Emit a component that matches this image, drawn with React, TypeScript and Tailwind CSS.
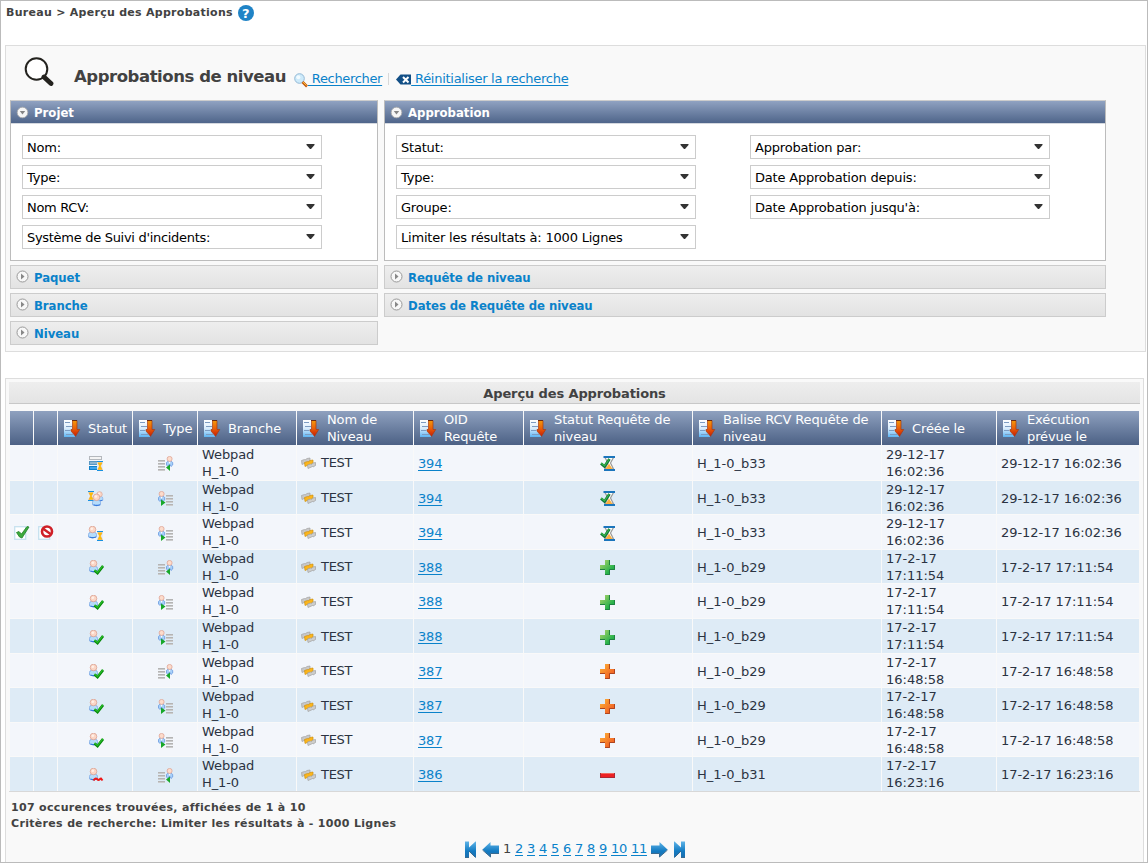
import React from "react";

const heading = "font-['DejaVu_Sans_Condensed','DejaVu_Sans',sans-serif] font-bold text-[13px]";

function SortIcon() {
  return (
    <svg width="17" height="18" viewBox="0 0 17 18" className="shrink-0">
      <defs>
        <linearGradient id="doc" x1="0" y1="0" x2="0" y2="1">
          <stop offset="0" stopColor="#ffffff" />
          <stop offset="0.5" stopColor="#d8ecfc" />
          <stop offset="1" stopColor="#5cb4f4" />
        </linearGradient>
        <linearGradient id="arr" x1="0" y1="0" x2="0" y2="1">
          <stop offset="0" stopColor="#f39a0c" />
          <stop offset="0.5" stopColor="#ea5f08" />
          <stop offset="1" stopColor="#c81c04" />
        </linearGradient>
      </defs>
      <path d="M0 1H11V18H0Z" fill="url(#doc)" />
      <path d="M1 3.500H6M2 7.500H8M1 11.500H6M2 15.500H9" stroke="#7d9cc2" strokeWidth="1" />
      <path d="M8.500 1.500H13V10.500H15.700L11.500 17.300L7 12V10.500H8.500Z" fill="url(#arr)" stroke="#a83a12" strokeWidth="0.7" />
      <path d="M8 1.500H13" stroke="#6b2a10" strokeWidth="1" />
    </svg>
  );
}

function Person({ x = 0, y = 0, s = 1 }: { x?: number; y?: number; s?: number }) {
  return (
    <g transform={`translate(${x} ${y}) scale(${s})`}>
      <path d="M0.5 11V8.5Q0.5 6.5 2.5 6.3H6.5Q8.5 6.5 8.5 8.5V11Q4.500 13 .5 11Z" fill="#b5dcfb" stroke="#7fa9e4" strokeWidth="0.8" />
      <path d="M1.500 11Q4.500 12.300 8 11" stroke="#3578dc" strokeWidth="1.200" fill="none" />
      <circle cx="4.500" cy="3.500" r="3.300" fill="#fbd6c6" stroke="#dba293" strokeWidth="0.8" />
      <circle cx="3.800" cy="2.700" r="1.300" fill="#fff0e8" />
    </g>
  );
}

function SmallPerson({ x = 0 }: { x?: number }) {
  return (
    <g transform={`translate(${x} 0)`}>
      <path d="M0.500 9V6.500L2 5.200H5L6.700 6.500V9L5 10.500L3.500 8L2 10.500Z" fill="#a9d1f8" stroke="#6898e0" strokeWidth="0.8" />
      <path d="M2.700 5.500H4.500L3.600 8Z" fill="#fff" />
      <circle cx="3.600" cy="2.900" r="2.500" fill="#fcdccc" stroke="#e0a496" strokeWidth="0.8" />
    </g>
  );
}

function Hourglass({ x, y, h = 9 }: { x: number; y: number; h?: number }) {
  return (
    <g transform={`translate(${x} ${y}) scale(1 ${h / 9})`}>
      <rect width="6" height="9" fill="#e5effa" />
      <path d="M0 .5H6M0 8.500H6" stroke="#1491e4" strokeWidth="1" />
      <path d="M.8 1.500H5.200L3.500 4.500L5.200 7.700H.8L2.500 4.500Z" fill="#ffc400" stroke="#f09a20" strokeWidth="0.5" />
    </g>
  );
}

function StatusIcon({ kind }: { kind: string }) {
  return (
    <svg width="16" height="16" viewBox="0 0 16 16">
      {kind === "list" && (
        <g>
          <rect x="1.500" y=".5" width="12" height="3" fill="#f4f4f4" stroke="#b4b8bd" />
          <rect x="1.500" y="5.500" width="12" height="3" fill="#8bb6d3" stroke="#5797c2" />
          <rect x="1.500" y="10.500" width="12" height="3" fill="#42a5ec" stroke="#1082cc" />
          <Hourglass x={9} y={5} h={10} />
        </g>
      )}
      {kind === "group" && (
        <g>
          <Hourglass x={0} y={0} h={10} />
          <Person x={8} y={0.5} s={0.8} />
          <Person x={4} y={2.800} />
        </g>
      )}
      {kind === "wait" && (
        <g>
          <Person x={0} y={0} />
          <Hourglass x={9} y={5} h={10} />
        </g>
      )}
      {kind === "ok" && (
        <g>
          <Person x={1} y={0} />
          <path d="M6.500 10.500L9.500 13L15 6" fill="none" stroke="#078a0b" strokeWidth="2.700" />
          <path d="M6.500 10.100L9.500 12.400L15 5.600" fill="none" stroke="#28bd28" strokeWidth="1.200" />
        </g>
      )}
      {kind === "no" && (
        <g>
          <Person x={1} y={0} />
          <path d="M5.500 12.500Q7.500 9.500 9 11T11.500 11.500T13 10.500L14.500 12.500" fill="none" stroke="#ee1717" strokeWidth="2" />
        </g>
      )}
    </svg>
  );
}

function TypeIcon({ right }: { right: boolean }) {
  const lines = right ? 0 : 8;
  return (
    <svg width="16" height="16" viewBox="0 0 16 16">
      {[4, 7, 10, 13].map((y) => (
        <g key={y}>
          <rect x={lines} y={y} width="7" height="2" fill="#cccccc" />
          <rect x={lines} y={y} width="7" height="1" fill="#b4b4b4" />
        </g>
      ))}
      <SmallPerson x={right ? 8 : 0} />
      {right ? (
        <path d="M12 8.500L8 11.500L12 15Z" fill="#18a829" />
      ) : (
        <path d="M3 8.500L7.500 11.500L3 15Z" fill="#18a829" />
      )}
    </svg>
  );
}

function LevelIcon() {
  return (
    <svg width="15" height="13" viewBox="0 0 15 13" className="mt-0.5 shrink-0">
      <path d="M.5 3.500L3.500 2.500L4 3L6 1.500L9 1V4.500L6 6L5.500 5.500L1 7.500Z" fill="#c8c8c8" stroke="#a2a2a2" strokeWidth=".7" />
      <path d="M3.500 5.500L6.500 4.500L7 5L9 3.500L12 3V6.500L9 8L8.500 7.500L4 9.500Z" fill="#fbb51c" stroke="#cf900f" strokeWidth=".7" />
      <path d="M6.500 8L9.500 7L10 7.500L12 6L14.500 5.500V8.500L12 10L11.500 9.500L7 11.500Z" fill="#cdcdcb" stroke="#a0a0a0" strokeWidth=".7" />
    </svg>
  );
}

function RequestIcon({ kind }: { kind: string }) {
  return (
    <svg width="16" height="16" viewBox="0 0 16 16">
      <defs>
        <linearGradient id="green" x1="0" y1="0" x2="1" y2="1">
          <stop offset="0.2" stopColor="#8ccb62" />
          <stop offset="0.7" stopColor="#25b14b" />
        </linearGradient>
        <linearGradient id="orange" x1="0" y1="0" x2="1" y2="1">
          <stop offset="0.1" stopColor="#fdab35" />
          <stop offset="0.7" stopColor="#f26a26" />
        </linearGradient>
      </defs>
      {kind === "hour" && (
        <g>
          <path d="M5 1.500H13.500L10.500 7L13.500 13H5L8 7Z" fill="#fff" stroke="#9b9b98" strokeWidth="1.200" />
          <path d="M9 7.500L12.500 13H5.500Z" fill="#fbb040" />
          <path d="M3.500 1H15M4 14H15" stroke="#1b75bc" strokeWidth="1.800" />
          <path d="M1 7.500L4.500 10.500L9.500 3" fill="none" stroke="#0c7436" strokeWidth="2.800" />
          <path d="M1 7.100L4.500 9.800L9.300 3" fill="none" stroke="#39b54a" strokeWidth="1.200" />
        </g>
      )}
      {(kind === "green" || kind === "orange") && (
        <g>
          <path
            d="M5 0H10V5H15V10H10V15H5V10H0V5H5Z"
            fill={kind === "green" ? "url(#green)" : "url(#orange)"}
          />
          <path
            d="M9.500 0V5M14.500 5V9.500H9.500V14.500H5M5 9.500H0"
            fill="none"
            stroke={kind === "green" ? "#1f8040" : "#ad4520"}
            strokeWidth="1"
          />
        </g>
      )}
      {kind === "minus" && <rect x=".5" y="5.500" width="14" height="4" fill="#ed2024" stroke="#ab2833" />}
      {kind === "minus" && <path d="M1 5.500H14" stroke="#f0695f" />}
    </svg>
  );
}

function ApproveIcon() {
  return (
    <svg width="16" height="16" viewBox="0 0 16 16">
      <rect x=".7" y="1.700" width="11" height="12.600" fill="#fff" stroke="#c6e1ef" strokeWidth="1.300" />
      <path d="M2.500 7.500L5 6.500L7.500 9L13 1.500L15 2L8 13L5.500 12Z" fill="#3caa3c" stroke="#208128" strokeWidth=".8" />
    </svg>
  );
}

function RejectIcon() {
  return (
    <svg width="16" height="16" viewBox="0 0 16 16">
      <rect x=".7" y="1.700" width="11" height="12.600" fill="#fff" stroke="#c6e1ef" strokeWidth="1.300" />
      <circle cx="9" cy="6.500" r="5" fill="#fff" stroke="#cf2027" strokeWidth="2.600" />
      <path d="M5.500 4L12.500 9" stroke="#cf2027" strokeWidth="2.400" />
    </svg>
  );
}

function Chevron({ open }: { open: boolean }) {
  return open ? (
    <svg width="13" height="13" viewBox="0 0 13 13">
      <circle cx="6.500" cy="6.500" r="5.300" fill="#f6f6f6" stroke="#a9a9a9" strokeWidth=".8" />
      <path d="M3.800 5H9.200L6.500 8.500Z" fill="#858585" />
    </svg>
  ) : (
    <svg width="13" height="13" viewBox="0 0 13 13" className="-mt-px">
      <circle cx="6.500" cy="6.500" r="5.500" fill="#f8f8f8" stroke="#999" strokeWidth="1" />
      <path d="M5 3.500L8.500 6.500L5 9.500Z" fill="#888" />
    </svg>
  );
}

function Select({ label, tracking = "tracking-[-0.2px]" }: { label: string; tracking?: string }) {
  return (
    <div className="flex h-6 w-[300px] items-center justify-between border border-[#cccccc] bg-white pr-1.5 pl-1 text-[13px] text-black">
      <span className={`pt-0.5 whitespace-nowrap ${tracking}`}>{label}</span>
      <svg width="9" height="5" viewBox="0 0 9 5" className="-mt-0.5">
        <path d="M.5 0H8.500V1L5 5H4L.5 1Z" fill="#333" />
      </svg>
    </div>
  );
}

function OpenPanel({ title, children }: { title: string; children: React.ReactNode }) {
  return (
    <section className="h-[161px] border border-[#bcbcbc] border-t-[#cccccc] bg-white">
      <h2 className={`flex h-[23px] items-center gap-[5px] border-b border-[#d4d8df] bg-linear-to-b from-[#90a2c1] to-[#4f658a] pl-[5px] text-white ${heading}`}>
        <Chevron open />
        <span className="pt-px">{title}</span>
      </h2>
      <div className="flex gap-[54px] pt-[11px] pl-[11px]">{children}</div>
    </section>
  );
}

function ClosedPanel({ title }: { title: string }) {
  return (
    <section className={`flex h-6 items-center gap-[5px] border border-[#cccccc] bg-linear-to-b from-[#eeeeee] to-[#e3e3e3] pl-[5px] tracking-[-0.06px] text-[#0a82ca] ${heading}`}>
      <Chevron open={false} />
      <span className="pt-px">{title}</span>
    </section>
  );
}

const headers: string[][] = [
  ["Statut"],
  ["Type"],
  ["Branche"],
  ["Nom de", "Niveau"],
  ["OID", "Requête"],
  ["Statut Requête de", "niveau"],
  ["Balise RCV Requête de", "niveau"],
  ["Créée le"],
  ["Exécution", "prévue le"],
];

type Row = {
  h: string;
  status: string;
  right: boolean;
  oid: string;
  req: string;
  tag: string;
  date: string;
  time: string;
  actions?: boolean;
};

const rows: Row[] = [
  { h: "h-[35px]", status: "list", right: true, oid: "394", req: "hour", tag: "H_1-0_b33", date: "29-12-17", time: "16:02:36" },
  { h: "h-[33px]", status: "group", right: false, oid: "394", req: "hour", tag: "H_1-0_b33", date: "29-12-17", time: "16:02:36" },
  { h: "h-[34px]", status: "wait", right: false, oid: "394", req: "hour", tag: "H_1-0_b33", date: "29-12-17", time: "16:02:36", actions: true },
  { h: "h-[33px]", status: "ok", right: true, oid: "388", req: "green", tag: "H_1-0_b29", date: "17-2-17", time: "17:11:54" },
  { h: "h-[34px]", status: "ok", right: false, oid: "388", req: "green", tag: "H_1-0_b29", date: "17-2-17", time: "17:11:54" },
  { h: "h-[34px]", status: "ok", right: false, oid: "388", req: "green", tag: "H_1-0_b29", date: "17-2-17", time: "17:11:54" },
  { h: "h-[33px]", status: "ok", right: true, oid: "387", req: "orange", tag: "H_1-0_b29", date: "17-2-17", time: "16:48:58" },
  { h: "h-[34px]", status: "ok", right: false, oid: "387", req: "orange", tag: "H_1-0_b29", date: "17-2-17", time: "16:48:58" },
  { h: "h-[33px]", status: "ok", right: false, oid: "387", req: "orange", tag: "H_1-0_b29", date: "17-2-17", time: "16:48:58" },
  { h: "h-[34px]", status: "no", right: true, oid: "386", req: "minus", tag: "H_1-0_b31", date: "17-2-17", time: "16:23:16" },
];

const grid = "grid grid-cols-[23px_23px_74px_64px_98px_116px_109px_168px_188px_114px_142px] gap-x-px";
const link = "text-[#0a82ca] underline underline-offset-2";

function TableRow({ row, alt }: { row: Row; alt: boolean }) {
  const cell = `flex items-center overflow-hidden ${row.h} ${alt ? "bg-[#deebf6]" : "bg-[#f3f6fb]"}`;
  return (
    <div className={`${grid} text-[13px] leading-[17px] whitespace-nowrap text-[#2b3342]`}>
      <div className={`${cell} pt-0.5 pl-1`}>{row.actions && <ApproveIcon />}</div>
      <div className={`${cell} pt-0.5 pl-1`}>{row.actions && <RejectIcon />}</div>
      <div className={`${cell} pt-[3px] pl-[30px]`}><StatusIcon kind={row.status} /></div>
      <div className={`${cell} pt-[3px] pl-[25px]`}><TypeIcon right={row.right} /></div>
      <div className={`${cell} pl-1 tracking-[-0.1px]`}><div>Webpad<br />H_1-0</div></div>
      <div className={`${cell} gap-[5px] pl-1 tracking-[-0.3px]`}><LevelIcon /><span>TEST</span></div>
      <div className={`${cell} pt-px pl-1 tracking-[-0.2px]`}><a className={link}>{row.oid}</a></div>
      <div className={`${cell} pt-[3px] pl-[76px]`}><RequestIcon kind={row.req} /></div>
      <div className={`${cell} pt-px pl-1`}>{row.tag}</div>
      <div className={`${cell} pl-1`}><div>{row.date}<br />{row.time}</div></div>
      <div className={`${cell} pt-px pl-1 tracking-[-0.05px]`}>{row.date} {row.time}</div>
    </div>
  );
}

function ArrowIcon({ flip }: { flip?: boolean }) {
  return (
    <svg width="18" height="17" viewBox="0 0 18 17" className={flip ? "-scale-x-100" : ""}>
      <defs>
        <linearGradient id="blue" x1="0" y1="0" x2="0" y2="1">
          <stop offset="0" stopColor="#5fb4e8" />
          <stop offset="0.6" stopColor="#137bc2" />
          <stop offset="1" stopColor="#1d6fae" />
        </linearGradient>
      </defs>
      <path d="M.5 8.500L8.500 1V4.500H17V12.500H8.500V16Z" fill="url(#blue)" />
      <path d="M.5 9L8.500 16V12.500H17" fill="none" stroke="#386a90" strokeWidth="1" />
    </svg>
  );
}

function EndIcon({ flip }: { flip?: boolean }) {
  return (
    <svg width="11" height="17" viewBox="0 0 11 17" className={flip ? "-scale-x-100" : ""}>
      <path d="M0 .5H4V6.500L10.500 .5H11V16.500H10.500L4 10.500V16.500H0Z" fill="url(#blue)" />
      <path d="M4 10L10.500 16.500M0 16.500H4" stroke="#386a90" strokeWidth="1" />
    </svg>
  );
}

export default function App() {
  return (
    <main className="flex h-[863px] w-[1148px] flex-col overflow-hidden border border-[#bbbbbb] bg-white font-['DejaVu_Sans',sans-serif] text-[#424242]">
      <nav className="flex h-[44px] shrink-0 items-start gap-[5px] pt-1 pl-[5px] text-[11px] font-bold">
        <span className="leading-4 tracking-[0.28px] whitespace-nowrap">Bureau &gt; Aperçu des Approbations</span>
        <span className="flex size-4 items-center justify-center rounded-full bg-[#1f83c6] text-[13px] leading-none text-white">?</span>
      </nav>

      <section className="ml-1 h-[307px] w-[1141px] shrink-0 border border-[#dddddd] bg-[#f9f9f9] px-1">
        <header className="flex h-[54px] items-start whitespace-nowrap">
          <svg width="30" height="31" viewBox="0 0 30 31" className="mt-[11px] ml-[14px] shrink-0">
            <circle cx="12.500" cy="12" r="10.800" fill="#fff" stroke="#24231f" strokeWidth="2" />
            <path d="M20 20L27 26.500" stroke="#24231f" strokeWidth="4.800" strokeLinecap="round" />
          </svg>
          <h1 className="mt-[20px] ml-[20px] w-[212px] text-[16.5px] leading-[22px] font-bold tracking-[-0.45px]">Approbations de niveau</h1>
          <svg width="14" height="15" viewBox="0 0 14 15" className="mt-[27px] ml-2 shrink-0">
            <circle cx="5.500" cy="5.500" r="4.800" fill="#cdeafa" stroke="#93b9d6" strokeWidth="1" />
            <circle cx="4.300" cy="4.300" r="2" fill="#f2fbff" />
            <path d="M8.500 9L13 13.500" stroke="#c45a12" strokeWidth="2.600" />
            <path d="M9 9L12.500 12.500" stroke="#ffc331" strokeWidth="1" />
          </svg>
          <a className={`mt-6 text-[13px] leading-[18px] tracking-[-0.33px] ${link}`}>&nbsp;Rechercher</a>
          <i className="mt-[27px] ml-[6px] h-3 w-px bg-[#d8d8d8]" />
          <svg width="15" height="11" viewBox="0 0 15 11" className="mt-[28px] ml-[7px] shrink-0">
            <path d="M0 5.500L4.500 .5H15V10.500H4.500Z" fill="#124f86" />
            <path d="M7 3L12.500 8.500M12.500 3L7 8.500" stroke="#fff" strokeWidth="2" />
          </svg>
          <a className={`mt-6 text-[13px] leading-[18px] tracking-[-0.28px] ${link}`}>&nbsp;Réinitialiser la recherche</a>
        </header>

        <div className="flex items-start gap-[6px]">
          <div className="flex w-[368px] flex-col gap-1">
            <OpenPanel title="Projet">
              <div className="flex flex-col gap-1.5">
                <Select label="Nom:" />
                <Select label="Type:" />
                <Select label="Nom RCV:" tracking="tracking-[-0.3px]" />
                <Select label="Système de Suivi d'incidents:" tracking="tracking-[-0.3px]" />
              </div>
            </OpenPanel>
            <ClosedPanel title="Paquet" />
            <ClosedPanel title="Branche" />
            <ClosedPanel title="Niveau" />
          </div>
          <div className="flex w-[722px] flex-col gap-1">
            <OpenPanel title="Approbation">
              <div className="flex flex-col gap-1.5">
                <Select label="Statut:" />
                <Select label="Type:" />
                <Select label="Groupe:" />
                <Select label="Limiter les résultats à: 1000 Lignes" />
              </div>
              <div className="flex flex-col gap-1.5">
                <Select label="Approbation par:" />
                <Select label="Date Approbation depuis:" />
                <Select label="Date Approbation jusqu'à:" />
              </div>
            </OpenPanel>
            <ClosedPanel title="Requête de niveau" />
            <ClosedPanel title="Dates de Requête de niveau" />
          </div>
        </div>
      </section>

      <section className="mt-[26px] ml-1 h-[490px] w-[1139px] shrink-0 border border-[#dddddd] bg-[#f9f9f9] px-[3px] pt-[3px]">
        <h2 className="flex h-[22px] items-center justify-center border-b border-[#c8c8c8] bg-linear-to-b from-[#eeeeee] to-[#e4e4e4] pt-0.5 text-[13px] font-bold tracking-[-0.12px]">Aperçu des Approbations</h2>
        <div className="mt-[7px] border-b border-[#d8d8d8] pl-px">
          <div className={`${grid} text-[13px] leading-[17px] tracking-[-0.12px] whitespace-nowrap text-white`}>
            <div className="h-[34px] bg-linear-to-b from-[#8fa1bf] to-[#4c6185]" />
            <div className="h-[34px] bg-linear-to-b from-[#8fa1bf] to-[#4c6185]" />
            {headers.map((lines, i) => (
              <div key={i} className="flex h-[34px] items-center gap-[7px] bg-linear-to-b from-[#8fa1bf] to-[#4c6185] pl-[6px]">
                <SortIcon />
                <div>{lines.map((l) => <div key={l}>{l}</div>)}</div>
              </div>
            ))}
          </div>
          <div className="flex flex-col gap-px">
            {rows.map((row, i) => <TableRow key={i} row={row} alt={i % 2 === 1} />)}
          </div>
        </div>
        <div className="mt-[8px] pl-[2px] text-[11px] leading-4 font-bold tracking-[0.32px]">
          <p>107 occurences trouvées, affichées de 1 à 10</p>
          <p>Critères de recherche: Limiter les résultats à - 1000 Lignes</p>
        </div>
        <div className="mt-[8px] ml-[456px] flex items-center text-[13px] leading-[18px]">
          <EndIcon />
          <span className="w-1.5" />
          <ArrowIcon />
          <div className="flex gap-1 pl-[3px] tracking-[-0.27px]">
            <span className="w-2">1</span>
            {["2", "3", "4", "5", "6", "7", "8", "9"].map((n) => <a key={n} className={`w-2 ${link}`}>{n}</a>)}
            {["10", "11"].map((n) => <a key={n} className={`w-4 ${link}`}>{n}</a>)}
          </div>
          <span className="w-[3px]" />
          <ArrowIcon flip />
          <span className="w-1.5" />
          <EndIcon flip />
        </div>
      </section>
    </main>
  );
}
